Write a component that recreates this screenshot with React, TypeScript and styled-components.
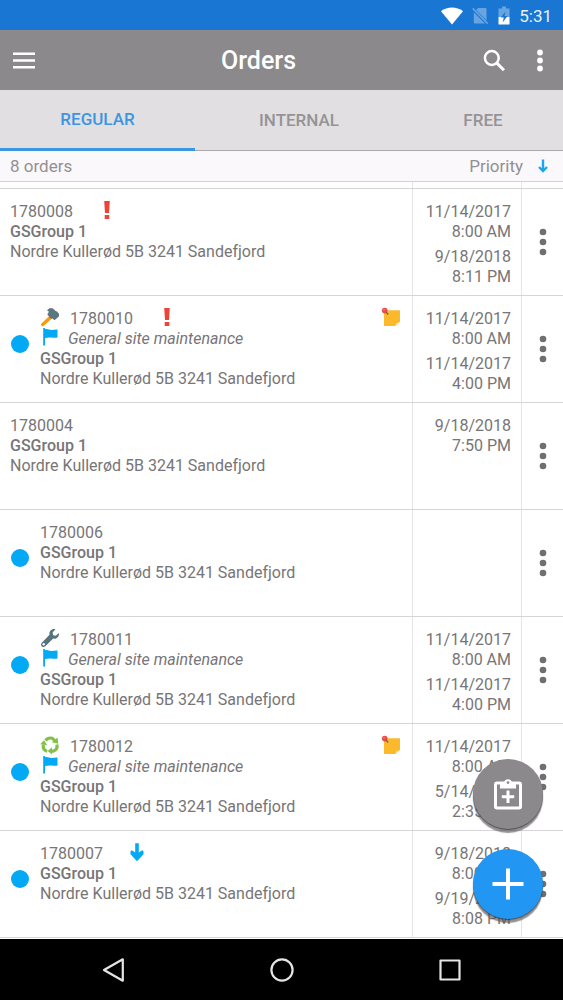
import React from "react";
import styled, { createGlobalStyle, css } from "styled-components";

const GlobalStyle = createGlobalStyle`
  * { box-sizing: border-box; }
  body { margin: 0; background: #fff; font-family: Roboto, "Liberation Sans", sans-serif; }
  button { font: inherit; color: inherit; border: 0; padding: 0; background: none; cursor: pointer; }
  svg { display: block; flex: none; }
`;

const Screen = styled.div`
  display: flex;
  flex-direction: column;
  height: 100vh;
  overflow: hidden;
  color: #777577;
  font-size: 16px;
  line-height: 20px;
`;

const StatusBar = styled.div`
  flex: none;
  display: flex;
  align-items: center;
  justify-content: flex-end;
  gap: 9px;
  height: 30px;
  padding: 1px 11px 0 0;
  background: #1976d2;
  color: #e8f2fc;
  font-size: 17px;
`;

const AppBar = styled.header`
  flex: none;
  display: grid;
  grid-template-columns: 1fr auto 1fr;
  align-items: center;
  height: 60px;
  padding: 1px 19px 0 11px;
  background: #8b898b;
  color: #fff;
`;

const Title = styled.h1`
  margin: 0;
  padding-right: 38px;
  font-size: 25px;
  line-height: 28px;
  font-weight: 500;
`;

const BarActions = styled.div<{ $start?: boolean }>`
  display: flex;
  justify-content: ${(p) => (p.$start ? "flex-start" : "flex-end")};
  align-items: center;
  gap: 30px;
`;

const Tabs = styled.div`
  flex: none;
  display: grid;
  grid-template-columns: 195fr 208fr 160fr;
  height: 61px;
  background: #e1dfe1;
`;

const Tab = styled.button<{ $active?: boolean }>`
  && {
    font-size: 17px;
    font-weight: 500;
    color: ${(p) => (p.$active ? "#3a96e3" : "#959395")};
    border-bottom: ${(p) => (p.$active ? "3px solid #3a96e0" : "1px solid #aaa8aa")};
  }
`;

const Summary = styled.div`
  flex: none;
  display: flex;
  align-items: center;
  justify-content: space-between;
  height: 31px;
  padding: 0 10px;
  background: #faf8fb;
  border-bottom: 1px solid #d3d1d3;
  color: #929092;
  font-size: 17px;
`;

const SortButton = styled.button`
  display: flex;
  align-items: center;
  gap: 10px;
`;

const ListArea = styled.main`
  position: relative;
  flex: 1;
  min-height: 0;
  overflow: hidden;
`;

const List = styled.ul`
  margin: 0;
  padding: 0;
  list-style: none;
`;

const Row = styled.li<{ $tail?: boolean }>`
  display: grid;
  grid-template-columns: 1fr 109px 42px;
  height: ${(p) => (p.$tail ? 7 : 107)}px;
  border-bottom: 1px solid #d6d4d6;
`;

const Info = styled.div`
  display: flex;
  padding: 13px 11px 0 10px;
`;

const Unread = styled.span`
  flex: none;
  width: 18px;
  height: 18px;
  margin: 26px 11px 0 1px;
  border-radius: 50%;
  background: #03a9f4;
`;

const Details = styled.div`
  flex: 1;
  min-width: 0;
`;

const Line = styled.div<{ $gap?: number }>`
  display: flex;
  align-items: center;
  gap: ${(p) => p.$gap ?? 0}px;
  height: 20px;
  white-space: nowrap;
`;

const Priority = styled.span`
  margin-left: 14px;
`;

const Task = styled.em`
  font-style: italic;
`;

const Customer = styled.div`
  font-weight: 500;
`;

const cell = css`
  border-left: 1px solid #e6e4e6;
`;

const Dates = styled.div`
  ${cell}
  display: flex;
  flex-direction: column;
  gap: 5px;
  padding: 13px 10px 0 0;
  text-align: right;
`;

const When = styled.time`
  display: block;
  white-space: pre-line;
`;

const MenuCell = styled.div`
  ${cell}
  display: flex;
`;

const MenuButton = styled.button`
  flex: 1;
  display: flex;
  align-items: center;
  justify-content: center;
`;

const Fabs = styled.div`
  position: absolute;
  right: 20px;
  bottom: 20px;
  display: flex;
  flex-direction: column;
  gap: 20px;
`;

const Fab = styled.button<{ $color: string }>`
  && {
    display: flex;
    align-items: center;
    justify-content: center;
    width: 70px;
    height: 70px;
    border-radius: 50%;
    background: ${(p) => p.$color};
    box-shadow: 0 1px 1px rgba(0, 0, 0, 0.45), 0 4px 1px rgba(90, 88, 90, 0.65);
  }
`;

const NavBar = styled.nav`
  flex: none;
  display: flex;
  align-items: center;
  justify-content: center;
  gap: 144px;
  height: 61px;
  background: #000;
`;

const WifiIcon = () => (
  <svg width="22" height="18" viewBox="0 0 22 18"><path d="M0 4.200C6.200-.8 15.800-.8 22 4.200L11 17.500z" fill="#fff" /></svg>
);

const NoSimIcon = () => (
  <svg width="17" height="18" viewBox="0 0 17 18">
    <path d="M6 1h7.500q1 0 1 1v11.500L4.200 3zM1.800 5.200 13 16.500H2.800q-1 0-1-1z" fill="#68a5e0" />
    <path d="m.7 1.400 15 15.200" stroke="#68a5e0" strokeWidth="1.500" />
  </svg>
);

const BatteryIcon = () => (
  <svg width="12" height="19" viewBox="0 0 12 19">
    <path d="M4 .5h4v2h3.500V11H.5V2.500H4z" fill="#68a5e0" />
    <path d="M.5 11h11v7.500H.5z" fill="#fff" />
    <path d="M7.500 5.500 2.800 11.500h3l-1.200 5 4.900-6.500h-3z" fill="#1976d2" />
  </svg>
);

const MenuIcon = () => (
  <svg width="26" height="20" viewBox="0 0 26 20"><path d="M2 2.700h22M2 9.500h22M2 16.300h22" stroke="#fff" strokeWidth="2.400" /></svg>
);

const SearchIcon = () => (
  <svg width="24" height="24" viewBox="0 0 24 24" fill="none" stroke="#fff">
    <circle cx="9.800" cy="9.000" r="6.900" strokeWidth="2.500" />
    <path d="m14.700 13.900 7.300 7.300" strokeWidth="3" />
  </svg>
);

const DotsIcon = () => (
  <svg width="8" height="28" viewBox="0 0 8 28" fill="#706e70">
    <circle cx="4" cy="4" r="3.300" /><circle cx="4" cy="14" r="3.300" /><circle cx="4" cy="24" r="3.300" />
  </svg>
);

const BarDotsIcon = () => (
  <svg width="8" height="24" viewBox="0 0 8 24" fill="#fff">
    <circle cx="4" cy="3.500" r="2.900" /><circle cx="4" cy="11.500" r="2.900" /><circle cx="4" cy="19.500" r="2.900" />
  </svg>
);

const SortArrow = () => (
  <svg width="20" height="20" viewBox="0 0 20 20" fill="none" stroke="#18a6f2">
    <path d="M10 3.500v11.500" strokeWidth="2.400" /><path d="m6 11 4 4 4-4" strokeWidth="2.400" />
  </svg>
);

const LowIcon = () => (
  <svg width="20" height="20" viewBox="0 2 20 20" fill="#03a9f4" overflow="visible">
    <path d="M8.200 1.200h3.600v9.300L15.200 8.300l1.300 1v3L10 19.300 3.500 12.300v-3l1.300-1 3.400 2.200z" />
  </svg>
);

const HighIcon = () => (
  <svg width="20" height="20" viewBox="0 2 20 20" fill="#ee4437" overflow="visible">
    <path d="M7.200 1h5.600L12 13H8zM7.700 15h4.600v4H7.700z" />
  </svg>
);

const FlagIcon = () => (
  <svg width="20" height="20" viewBox="0 2 20 20" fill="#03a9f4" overflow="visible">
    <path d="M3.200 1H5v1.200c2.700-.8 4.300.9 6.700.7 2-.1 3.700-.6 5.800-.4v7.900c-2.200.8-4.200.2-6.200.1-2.300-.2-3.900-.1-6.300.6v7.400H3.200z" />
  </svg>
);

const HammerIcon = () => (
  <svg width="20" height="20" viewBox="0 2 20 20" overflow="visible">
    <path d="m9.800 8.500 2.600 2.500-8.900 8q-1 .8-2-.2t-.2-2z" fill="#ff9800" />
    <path d="M7 3.200 9.800 1l3.200.4 2.600 2.700 1.400.3 2 2.400-.1 2.700-4.400 3.800-1.900-1.700-1.600.1-3.700-4.200 1.600-2.700-.9-.8z" fill="#5b7780" />
  </svg>
);

const WrenchIcon = () => (
  <svg width="20" height="20" viewBox="0 2 20 20" overflow="visible">
    <path d="M15.500 1.200 12.600 4.400l.5 2.800 2.700.6 3.100-2.900c.5 3.600-2.100 6.500-5.700 5.700L5.300 18.200c-2.500 2.200-5.700-1-3.500-3.500l7.700-7.900C8.700 3.200 11.900.2 15.500 1.200z" fill="#56737e" />
    <circle cx="3.700" cy="16.300" r="1.200" fill="#fff" />
  </svg>
);

const RecycleIcon = () => (
  <svg width="20" height="20" viewBox="0 2 20 20" fill="none" stroke="#83c046" strokeWidth="3.200" overflow="visible">
    <path d="M5.600 5.600C7.200 3.200 9.200 2.600 12.200 3.200L15 5.800" />
    <path d="M16.800 9.500c.8 3-.3 5.500-3.400 6.600l-3 .1" />
    <path d="M7.300 16.300c-3-.7-4.400-3.100-4-6.500" />
    <g fill="#83c046" stroke="none">
      <path d="m17.600 2.500.6 6.300-6.300-1.500zM12 12.200v7.300l-4.300-3.600zM.3 9.300 4 5.200l3.200 5z" />
    </g>
  </svg>
);

const NoteIcon = () => (
  <svg width="20" height="20" viewBox="0 2 20 20" overflow="visible">
    <path d="M3 3.200h16v11.300L14.700 19H3z" fill="#fdb92c" />
    <path d="M19 14.500 14.700 19c-.6.100-1-.1-1-.1 1.200-.9 1.600-1.800 1.500-2.800 1.400 0 2.700-.4 3.800-1.600z" fill="#ffe1a0" />
    <circle cx="3.700" cy="3.600" r="2.800" fill="#ef4b42" />
    <path d="m5 5 2.200 2.500" stroke="#7c5a58" strokeWidth="1.300" />
    <circle cx="3" cy="2.800" r=".8" fill="#f88" />
  </svg>
);

const ClipboardIcon = () => (
  <svg width="30" height="32" viewBox="0 0 30 32" fill="none" stroke="#fff">
    <rect x="2.500" y="5" width="25" height="25" rx="1.500" strokeWidth="3" />
    <path d="M7 4h4.200a4 4 0 0 1 7.600 0H23v6.500H7z" fill="#fff" stroke="none" />
    <circle cx="15" cy="4.600" r="1.400" fill="#8b898b" stroke="none" />
    <path d="M15 12.500v12.500M8.800 18.800h12.400" strokeWidth="3" />
  </svg>
);

const PlusIcon = () => (
  <svg width="32" height="32" viewBox="0 0 32 32"><path d="M16 .5v31M.5 16h31" stroke="#fff" strokeWidth="4" /></svg>
);

const navStroke = { fill: "none", stroke: "#e6e4e6", strokeWidth: 2.2, strokeLinejoin: "round" as const };

const BackIcon = () => <svg width="24" height="24" viewBox="0 0 24 24" {...navStroke}><path d="M20.800 1.300v21.400L2 12z" /></svg>;
const HomeIcon = () => <svg width="24" height="24" viewBox="0 0 24 24" {...navStroke}><circle cx="12" cy="12" r="10.600" /></svg>;
const RecentIcon = () => <svg width="24" height="24" viewBox="0 0 24 24" {...navStroke}><rect x="2.500" y="2.500" width="19" height="19" /></svg>;

const kinds = { hammer: HammerIcon, wrench: WrenchIcon, recycle: RecycleIcon };

type Order = {
  id: string;
  kind?: keyof typeof kinds;
  priority?: "high" | "low";
  unread?: boolean;
  task?: string;
  note?: boolean;
  dates: string[];
};

const TASK = "General site maintenance";

const orders: Order[] = [
  { id: "1780008", priority: "high", dates: ["11/14/2017\n8:00 AM", "9/18/2018\n8:11 PM"] },
  { id: "1780010", kind: "hammer", priority: "high", unread: true, task: TASK, note: true, dates: ["11/14/2017\n8:00 AM", "11/14/2017\n4:00 PM"] },
  { id: "1780004", dates: ["9/18/2018\n7:50 PM"] },
  { id: "1780006", unread: true, dates: [] },
  { id: "1780011", kind: "wrench", unread: true, task: TASK, dates: ["11/14/2017\n8:00 AM", "11/14/2017\n4:00 PM"] },
  { id: "1780012", kind: "recycle", unread: true, task: TASK, note: true, dates: ["11/14/2017\n8:00 AM", "5/14/2018\n2:35 PM"] },
  { id: "1780007", priority: "low", unread: true, dates: ["9/18/2018\n8:00 AM", "9/19/2018\n8:08 PM"] },
];

const Spacer = styled.span`
  flex: 1;
`;

const EmptyCell = styled.div`
  ${cell}
`;

function OrderRow({ order }: { order: Order }) {
  const Kind = order.kind && kinds[order.kind];
  return (
    <Row>
      <Info>
        {order.unread && <Unread />}
        <Details>
          <Line $gap={10}>
            {Kind && <Kind />}
            <span>{order.id}</span>
            {order.priority && <Priority>{order.priority === "high" ? <HighIcon /> : <LowIcon />}</Priority>}
            <Spacer />
            {order.note && <NoteIcon />}
          </Line>
          {order.task && <Line $gap={8}><FlagIcon /><Task>{order.task}</Task></Line>}
          <Customer>GSGroup 1</Customer>
          <Line>Nordre Kullerød 5B 3241 Sandefjord</Line>
        </Details>
      </Info>
      <Dates>{order.dates.map((d, i) => <When key={i}>{d}</When>)}</Dates>
      <MenuCell><MenuButton aria-label={"Actions for order " + order.id}><DotsIcon /></MenuButton></MenuCell>
    </Row>
  );
}

export default function App() {
  return (
    <>
      <GlobalStyle />
      <Screen>
        <StatusBar><WifiIcon /><NoSimIcon /><BatteryIcon /><span>5:31</span></StatusBar>
        <AppBar>
          <BarActions $start><button aria-label="Menu"><MenuIcon /></button></BarActions>
          <Title>Orders</Title>
          <BarActions>
            <button aria-label="Search"><SearchIcon /></button>
            <button aria-label="More"><BarDotsIcon /></button>
          </BarActions>
        </AppBar>
        <Tabs role="tablist">
          <Tab role="tab" aria-selected="true" $active>REGULAR</Tab>
          <Tab role="tab" aria-selected="false">INTERNAL</Tab>
          <Tab role="tab" aria-selected="false">FREE</Tab>
        </Tabs>
        <Summary>
          <span>8 orders</span>
          <SortButton>Priority<SortArrow /></SortButton>
        </Summary>
        <ListArea>
          <List>
            <Row $tail><div /><EmptyCell /><EmptyCell /></Row>
            {orders.map((o) => <OrderRow key={o.id} order={o} />)}
          </List>
          <Fabs>
            <Fab $color="#8b898b" aria-label="Add from template"><ClipboardIcon /></Fab>
            <Fab $color="#2196f3" aria-label="New order"><PlusIcon /></Fab>
          </Fabs>
        </ListArea>
        <NavBar>
          <button aria-label="Back"><BackIcon /></button>
          <button aria-label="Home"><HomeIcon /></button>
          <button aria-label="Recent apps"><RecentIcon /></button>
        </NavBar>
      </Screen>
    </>
  );
}
